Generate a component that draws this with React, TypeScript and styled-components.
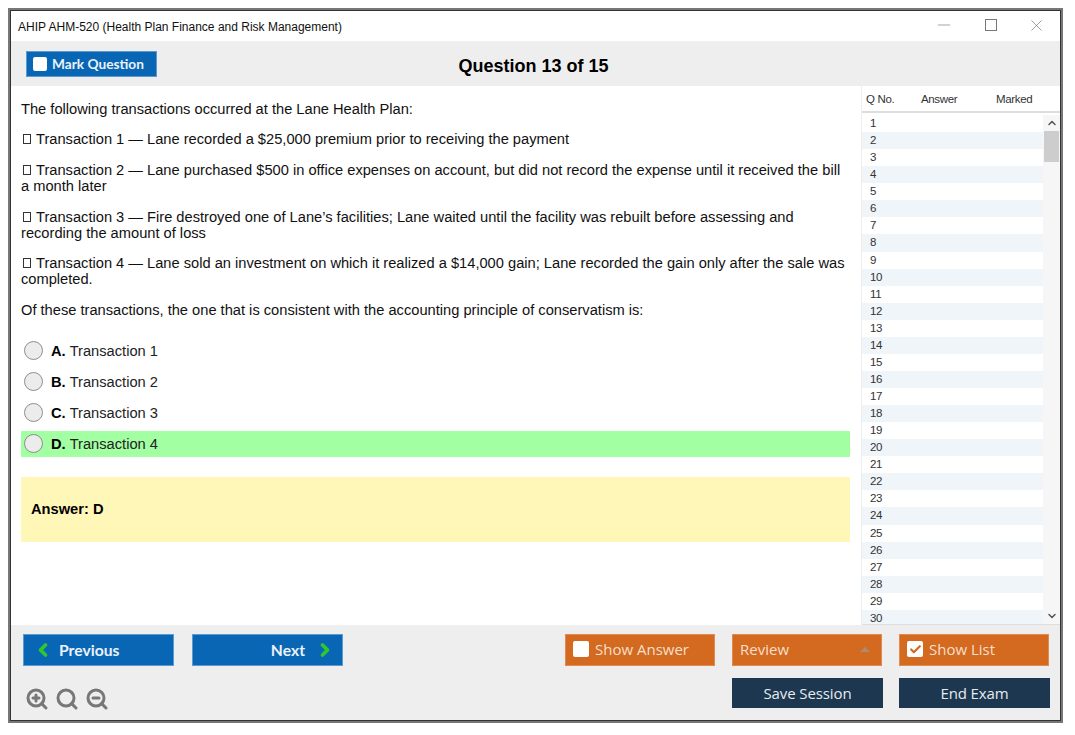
import React from "react";
import styled, { createGlobalStyle } from "styled-components";
import { ZoomIn, ZoomOut, Search, ChevronLeft, ChevronRight, ChevronUp, ChevronDown, Check, Minus, X } from "lucide-react";

const Global = createGlobalStyle`
  html, body { margin: 0; padding: 0; background: #fff; }
  body { font-family: "Liberation Sans", Arial, sans-serif; color: #000; }
  * { box-sizing: border-box; }
`;

const Page = styled.div`
  width: 1075px;
  height: 735px;
  padding: 8px 12px 12px 8px;
`;
const Window = styled.div`
  width: 1055px;
  height: 715px;
  border: 2px solid #777;
  display: flex;
`;
const Inner = styled.div`
  flex: 1;
  border: 1px solid #333;
  display: flex;
  flex-direction: column;
  min-width: 0;
`;
const TitleBar = styled.div`
  height: 30px;
  flex: none;
  background: #fff;
  display: flex;
  align-items: center;
  justify-content: space-between;
  padding: 0 14px 0 7px;
  font-size: 12px;
  color: #111;
`;
const TitleText = styled.span`
  padding-top: 2px;
`;
const WinControls = styled.div`
  display: flex;
  gap: 30.5px;
  align-items: center;
  color: #777;
  padding-bottom: 2px;
`;
const Toolbar = styled.div`
  height: 45px;
  flex: none;
  background: #eee;
  display: grid;
  grid-template-columns: 1fr auto 1fr;
  align-items: center;
  padding: 0 19px 0 15px;
`;
const MarkButton = styled.div`
  width: 131px;
  height: 26px;
  background: #0966b4;
  border: 1px solid #5b9bd0;
  color: #eaf2fa;
  display: flex;
  align-items: center;
  gap: 5px;
  padding-left: 6px;
  font: 700 13.7px "Lato", sans-serif;
`;
const Heading = styled.div`
  font-size: 18px;
  font-weight: 700;
  margin-top: 5px;
`;
const Box = styled.span<{ $large?: boolean }>`
  width: ${(p) => (p.$large ? "16px" : "14px")};
  height: ${(p) => (p.$large ? "16px" : "14px")};
  flex: none;
  background: #fff;
  border-radius: 2px;
  display: inline-flex;
  align-items: center;
  justify-content: center;
  color: #d2691f;
`;
const Main = styled.div`
  flex: 1;
  min-height: 0;
  display: flex;
`;
const Content = styled.div`
  width: 850px;
  flex: none;
  padding: 15px 10px 0 10px;
  background: #fff;
`;
const Para = styled.p`
  margin: 0 0 14.5px;
  font-size: 14.67px;
  line-height: 16px;
  color: #111;
  &:first-child {
    margin-bottom: 14px;
  }
  &:nth-child(2) {
    margin-bottom: 15px;
  }
`;
const Tofu = styled.span`
  display: inline-block;
  width: 8px;
  height: 10px;
  border: 1px solid #333;
  margin: 0 5px 0 2px;
`;
const Options = styled.div`
  display: flex;
  flex-direction: column;
  gap: 5px;
  margin-top: 20px;
`;
const Option = styled.div<{ $on?: boolean }>`
  height: 26px;
  margin-right: 1px;
  display: flex;
  align-items: center;
  padding-left: 3px;
  background: ${(p) => (p.$on ? "#a2ffa2" : "transparent")};
  font-size: 14.67px;
  color: #222;
`;
const Radio = styled.span`
  width: 19px;
  height: 19px;
  border-radius: 50%;
  background: #ececec;
  border: 1px solid #8d8d8d;
  margin-right: 8px;
`;
const Letter = styled.b`
  color: #000;
  margin-right: 4px;
`;
const AnswerBox = styled.div`
  margin: 20px 1px 0 0;
  height: 65px;
  background: #fff7b8;
  display: flex;
  align-items: center;
  padding-left: 10px;
  font-size: 14.67px;
  font-weight: 700;
`;
const Side = styled.div`
  flex: 1;
  min-width: 0;
  display: flex;
  flex-direction: column;
  border-left: 1px solid #eee;
  background: #fff;
`;
const SideHead = styled.div`
  height: 27px;
  flex: none;
  display: grid;
  grid-template-columns: 55px 75px 1fr;
  align-items: center;
  padding: 0 0 0 4px;
  font-size: 11.5px;
  letter-spacing: -0.35px;
  color: #333;
  border-bottom: 2px solid #ddd;
`;
const SideBody = styled.div`
  flex: 1;
  min-height: 0;
  display: flex;
  overflow: hidden;
  padding-top: 2px;
  border-bottom: 1px solid #ddd;
`;
const Rows = styled.div`
  width: 181px;
  flex: none;
`;
const Row = styled.div<{ $alt: boolean }>`
  height: 17.07px;
  line-height: 17px;
  padding-left: 8px;
  font-size: 11.5px;
  letter-spacing: -0.3px;
  color: #333;
  background: ${(p) => (p.$alt ? "#f0f5fa" : "#fff")};
`;
const Scroll = styled.div`
  flex: 1;
  display: flex;
  flex-direction: column;
  align-items: center;
  justify-content: space-between;
  background: #f6f6f6;
  color: #555;
  position: relative;
`;
const Thumb = styled.div`
  position: absolute;
  top: 16px;
  left: 1px;
  right: 1px;
  height: 31px;
  background: #cdcdcd;
`;
const ScrollArrow = styled.div`
  height: 16px;
  display: flex;
  align-items: center;
`;
const Footer = styled.div`
  height: 95px;
  flex: none;
  background: #eee;
  display: flex;
  justify-content: space-between;
  padding: 9px 10px 0 12px;
`;
const Col = styled.div`
  display: flex;
  flex-direction: column;
`;
const BtnRow = styled.div`
  display: flex;
  gap: 18px;
`;
const NavButton = styled.div<{ $right?: boolean }>`
  width: 151px;
  height: 32px;
  background: #0966b4;
  border: 1px solid #5b9bd0;
  color: #eaf2fa;
  display: flex;
  align-items: center;
  justify-content: ${(p) => (p.$right ? "flex-end" : "flex-start")};
  gap: ${(p) => (p.$right ? "10px" : "6px")};
  padding: 0 ${(p) => (p.$right ? "7px" : "0")} 0 ${(p) => (p.$right ? "0" : "9px")};
  font: 700 15.7px "Lato", sans-serif;
`;
const OrangeButton = styled.div`
  width: 150px;
  height: 32px;
  background: #d36a20;
  border: 1px solid #e08a50;
  color: #f7dfcd;
  display: flex;
  align-items: center;
  gap: 6px;
  padding: 0 8px 2px 7px;
  font: 400 15px "Open Sans", sans-serif;
`;
const Caret = styled.span`
  margin-left: auto;
  margin-right: 3px;
  width: 0;
  height: 0;
  border-left: 5px solid transparent;
  border-right: 5px solid transparent;
  border-bottom: 5px solid #b08a70;
`;
const DarkButton = styled.div`
  width: 151px;
  height: 30px;
  background: #1c374f;
  color: #e6ebef;
  display: flex;
  align-items: center;
  justify-content: center;
  font: 400 15px "Open Sans", sans-serif;
  letter-spacing: -0.1px;
`;
const ActionCol = styled(Col)`
  width: 485px;
  gap: 12px;
`;
const OrangeRow = styled(BtnRow)`
  gap: 17px;
`;
const DarkRow = styled(BtnRow)`
  gap: 16px;
  justify-content: flex-end;
`;
const ZoomRow = styled.div`
  display: flex;
  gap: 6px;
  margin: 21px 0 0 2px;
  color: #777;
`;

const questions = Array.from({ length: 30 }, (_, i) => i + 1);

export default function App() {
  return (
    <Page>
      <Global />
      <Window>
        <Inner>
          <TitleBar>
            <TitleText>AHIP AHM-520 (Health Plan Finance and Risk Management)</TitleText>
            <WinControls>
              <Minus size={20} strokeWidth={0.8} />
              <svg width="12" height="12" viewBox="0 0 12 12" fill="none" stroke="currentColor">
                <rect x="0.5" y="0.5" width="11" height="11" />
              </svg>
              <X size={19} strokeWidth={0.9} />
            </WinControls>
          </TitleBar>
          <Toolbar>
            <MarkButton>
              <Box />
              Mark Question
            </MarkButton>
            <Heading>Question 13 of 15</Heading>
          </Toolbar>
          <Main>
            <Content>
              <Para>The following transactions occurred at the Lane Health Plan:</Para>
              <Para><Tofu />Transaction 1 — Lane recorded a $25,000 premium prior to receiving the payment</Para>
              <Para><Tofu />Transaction 2 — Lane purchased $500 in office expenses on account, but did not record the expense until it received the bill a month later</Para>
              <Para><Tofu />Transaction 3 — Fire destroyed one of Lane’s facilities; Lane waited until the facility was rebuilt before assessing and recording the amount of loss</Para>
              <Para><Tofu />Transaction 4 — Lane sold an investment on which it realized a $14,000 gain; Lane recorded the gain only after the sale was completed.</Para>
              <Para>Of these transactions, the one that is consistent with the accounting principle of conservatism is:</Para>
              <Options>
                <Option><Radio /><Letter>A.</Letter>Transaction 1</Option>
                <Option><Radio /><Letter>B.</Letter>Transaction 2</Option>
                <Option><Radio /><Letter>C.</Letter>Transaction 3</Option>
                <Option $on><Radio /><Letter>D.</Letter>Transaction 4</Option>
              </Options>
              <AnswerBox>Answer: D</AnswerBox>
            </Content>
            <Side>
              <SideHead>
                <span>Q No.</span>
                <span>Answer</span>
                <span>Marked</span>
              </SideHead>
              <SideBody>
                <Rows>
                  {questions.map((n) => (
                    <Row key={n} $alt={n % 2 === 0}>{n}</Row>
                  ))}
                </Rows>
                <Scroll>
                  <ScrollArrow><ChevronUp size={12} strokeWidth={3} /></ScrollArrow>
                  <Thumb />
                  <ScrollArrow><ChevronDown size={12} strokeWidth={3} /></ScrollArrow>
                </Scroll>
              </SideBody>
            </Side>
          </Main>
          <Footer>
            <Col>
              <BtnRow>
                <NavButton>
                  <ChevronLeft size={20} strokeWidth={4.5} color="#2fc72f" />
                  Previous
                </NavButton>
                <NavButton $right>
                  Next
                  <ChevronRight size={20} strokeWidth={4.5} color="#2fc72f" />
                </NavButton>
              </BtnRow>
              <ZoomRow>
                <ZoomIn size={24} strokeWidth={3} />
                <Search size={24} strokeWidth={3} />
                <ZoomOut size={24} strokeWidth={3} />
              </ZoomRow>
            </Col>
            <ActionCol>
              <OrangeRow>
                <OrangeButton><Box $large />Show Answer</OrangeButton>
                <OrangeButton>Review<Caret /></OrangeButton>
                <OrangeButton><Box $large><Check size={13} strokeWidth={4} /></Box>Show List</OrangeButton>
              </OrangeRow>
              <DarkRow>
                <DarkButton>Save Session</DarkButton>
                <DarkButton>End Exam</DarkButton>
              </DarkRow>
            </ActionCol>
          </Footer>
        </Inner>
      </Window>
    </Page>
  );
}
